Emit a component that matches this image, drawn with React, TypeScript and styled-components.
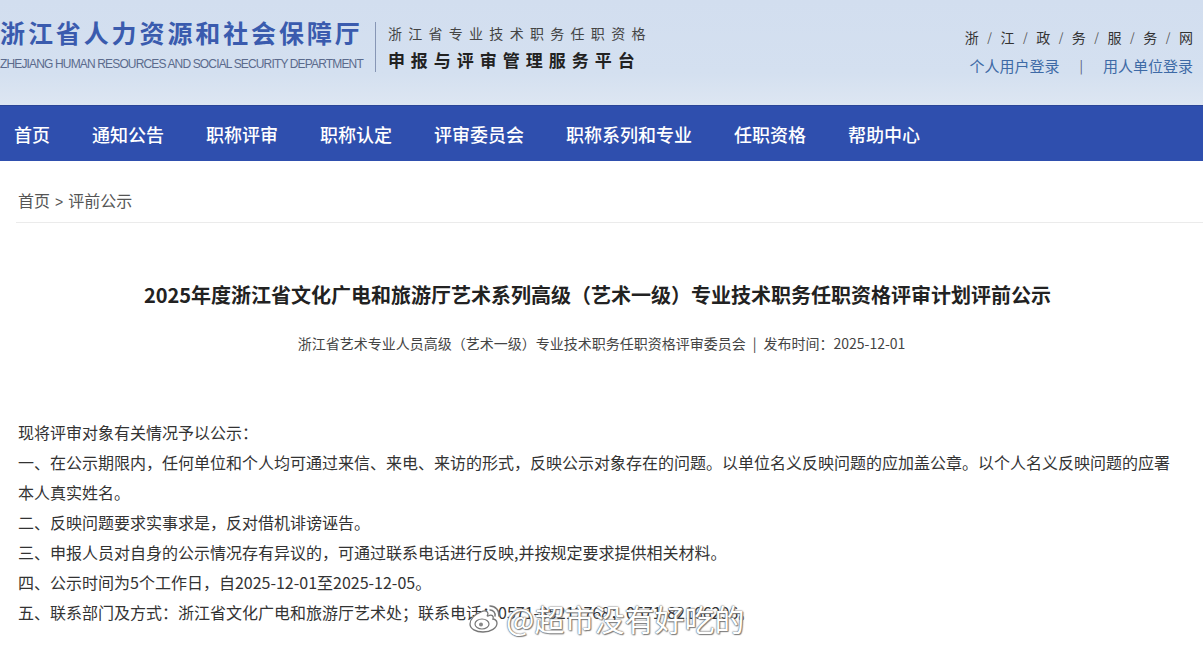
import React from "react"
import styled, { createGlobalStyle } from "styled-components"

const GlobalStyle = createGlobalStyle`
  html, body {
    margin: 0;
    padding: 0;
    background: #fff;
  }
  body {
    font-family: "Noto Sans CJK SC", "Noto Sans", "Liberation Sans", sans-serif;
    overflow: hidden;
  }
`

const Page = styled.div`
  position: relative;
  width: 1203px;
  height: 645px;
  overflow: hidden;
  background: #fff;
`

const Header = styled.header`
  height: 105px;
  display: flex;
  justify-content: space-between;
  background: linear-gradient(180deg, #d2deef 0%, #d4e0f0 70%, #dde6f2 100%);
`

const Brand = styled.div`
  display: flex;
  align-items: flex-start;
`

const Logo = styled.div`
  display: flex;
  flex-direction: column;
  padding-top: 15px;
`

const LogoTitle = styled.div`
  font-size: 25px;
  line-height: 34px;
  font-weight: 700;
  letter-spacing: 2.9px;
  color: #3a5bae;
  white-space: nowrap;
`

const LogoSub = styled.div`
  margin-top: 8px;
  font-family: "Liberation Sans", Arial, sans-serif;
  font-size: 12px;
  line-height: 14px;
  letter-spacing: -0.85px;
  color: #5b6b8d;
  white-space: nowrap;
`

const Divider = styled.div`
  width: 1px;
  height: 50px;
  margin: 22px 12px 0 12px;
  background: #8796b5;
`

const Platform = styled.div`
  display: flex;
  flex-direction: column;
  padding-top: 23px;
`

const PlatformTop = styled.div`
  font-size: 14px;
  line-height: 20px;
  letter-spacing: 6.3px;
  color: #444;
  white-space: nowrap;
`

const PlatformMain = styled.div`
  margin-top: 5px;
  font-size: 17px;
  line-height: 24px;
  font-weight: 700;
  letter-spacing: 6px;
  color: #222;
  white-space: nowrap;
`

const Quick = styled.div`
  display: flex;
  flex-direction: column;
  align-items: flex-end;
  padding: 27px 10px 0 0;
`

const GovLinks = styled.div`
  display: flex;
  align-items: center;
  font-size: 14px;
  line-height: 20px;
  color: #333;
`

const Slash = styled.span`
  margin: 0 8.5px;
  font-size: 12px;
  color: #555;
`

const LoginLinks = styled.div`
  margin-top: 9px;
  display: flex;
  align-items: center;
  font-size: 15px;
  line-height: 20px;
  color: #3e6aa6;
`

const Bar = styled.span`
  margin: 0 20px;
  font-size: 13px;
  color: #557;
`

const Nav = styled.nav`
  height: 56px;
  display: flex;
  align-items: center;
  gap: 42px;
  padding-left: 14px;
  background: #2f4fae;
  border-top: 1px solid #2a4597;
  box-sizing: border-box;
`

const NavItem = styled.span`
  font-size: 18px;
  font-weight: 500;
  color: #fff;
  white-space: nowrap;
`

const Crumbs = styled.div`
  margin-left: 16px;
  padding: 28px 0 9px 2px;
  font-size: 16px;
  line-height: 22px;
  color: #555;
  border-bottom: 1px solid #ebebeb;
`

const CrumbSep = styled.span`
  margin: 0 5px;
  font-family: "Liberation Sans", Arial, sans-serif;
  font-size: 14px;
`

const Article = styled.article`
  padding: 0 16px;
`

const Title = styled.h1`
  margin: 57px 0 0;
  padding-right: 8px;
  text-align: center;
  font-size: 20px;
  line-height: 30px;
  font-weight: 700;
  color: #222;
  white-space: nowrap;
`

const Meta = styled.div`
  margin-top: 23px;
  text-align: center;
  font-size: 14px;
  line-height: 20px;
  color: #444;
`

const MetaBar = styled.span`
  margin: 0 7px;
`

const Body = styled.div`
  margin-top: 64px;
  padding: 0 12px 0 2px;
  font-size: 16px;
  line-height: 30px;
  color: #333;
`

const Para = styled.p`
  margin: 0;
`

const Watermark = styled.div`
  position: absolute;
  left: 468px;
  top: 599px;
  display: flex;
  align-items: center;
  gap: 4px;
  color: #fff;
  font-size: 30px;
  line-height: 38px;
  text-shadow: 0 0 1px #555, 0 0 2px #777, 1px 1px 1px #888;
  white-space: nowrap;
`

const WeiboMark = () => (
  <svg width="34" height="30" viewBox="0 0 34 30">
    <path
      d="M13 9c-6 2-11 7-11 12 0 5 6 8 13 8 8 0 14-4 14-9 0-3-3-4-4-4 1-3-1-5-5-3-1 0-1 0 0-2 0-3-3-4-7-2z"
      fill="#fff"
      stroke="#777"
      strokeWidth="1.3"
    />
    <ellipse cx="14" cy="21" rx="7" ry="5" fill="#fff" stroke="#777" strokeWidth="1.2" />
    <circle cx="13" cy="21.5" r="2" fill="#888" />
    <path d="M22 3a9 9 0 0 1 9 10" fill="none" stroke="#777" strokeWidth="1.6" strokeLinecap="round" />
    <path d="M22 7a5 5 0 0 1 5 6" fill="none" stroke="#777" strokeWidth="1.4" strokeLinecap="round" />
  </svg>
)

const navItems = ["首页", "通知公告", "职称评审", "职称认定", "评审委员会", "职称系列和专业", "任职资格", "帮助中心"]
const govChars = ["浙", "江", "政", "务", "服", "务", "网"]

const paragraphs = [
  "现将评审对象有关情况予以公示：",
  "一、在公示期限内，任何单位和个人均可通过来信、来电、来访的形式，反映公示对象存在的问题。以单位名义反映问题的应加盖公章。以个人名义反映问题的应署本人真实姓名。",
  "二、反映问题要求实事求是，反对借机诽谤诬告。",
  "三、申报人员对自身的公示情况存有异议的，可通过联系电话进行反映,并按规定要求提供相关材料。",
  "四、公示时间为5个工作日，自2025-12-01至2025-12-05。",
  "五、联系部门及方式：浙江省文化广电和旅游厅艺术处；联系电话：0571-85212768；0571-82166296。",
]

const App = () => (
  <Page>
    <GlobalStyle />
    <Header>
      <Brand>
        <Logo>
          <LogoTitle>浙江省人力资源和社会保障厅</LogoTitle>
          <LogoSub>ZHEJIANG HUMAN RESOURCES AND SOCIAL SECURITY DEPARTMENT</LogoSub>
        </Logo>
        <Divider />
        <Platform>
          <PlatformTop>浙江省专业技术职务任职资格</PlatformTop>
          <PlatformMain>申报与评审管理服务平台</PlatformMain>
        </Platform>
      </Brand>
      <Quick>
        <GovLinks>
          {govChars.map((c, i) => (
            <React.Fragment key={i}>
              {i > 0 && <Slash>/</Slash>}
              <span>{c}</span>
            </React.Fragment>
          ))}
        </GovLinks>
        <LoginLinks>
          <span>个人用户登录</span>
          <Bar>|</Bar>
          <span>用人单位登录</span>
        </LoginLinks>
      </Quick>
    </Header>
    <Nav>
      {navItems.map((item) => (
        <NavItem key={item}>{item}</NavItem>
      ))}
    </Nav>
    <Crumbs>
      首页<CrumbSep>&gt;</CrumbSep>评前公示
    </Crumbs>
    <Article>
      <Title>2025年度浙江省文化广电和旅游厅艺术系列高级（艺术一级）专业技术职务任职资格评审计划评前公示</Title>
      <Meta>
        浙江省艺术专业人员高级（艺术一级）专业技术职务任职资格评审委员会<MetaBar>|</MetaBar>发布时间：2025-12-01
      </Meta>
      <Body>
        {paragraphs.map((p, i) => (
          <Para key={i}>{p}</Para>
        ))}
      </Body>
    </Article>
    <Watermark>
      <WeiboMark />
      <span>@超市没有好吃的</span>
    </Watermark>
  </Page>
)

export default App
